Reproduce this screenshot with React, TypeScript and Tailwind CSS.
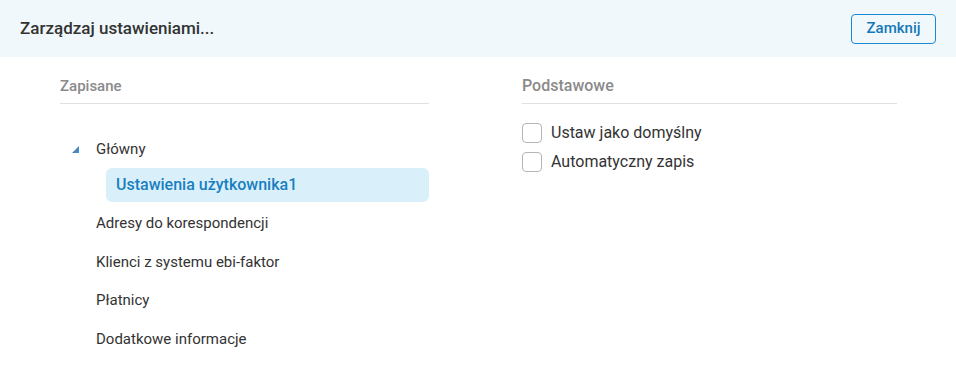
import React from 'react';

const items = ['Adresy do korespondencji', 'Klienci z systemu ebi-faktor', 'Płatnicy', 'Dodatkowe informacje'];

const Checkbox: React.FC<{ label: string }> = ({ label }) => (
  <label className="flex items-center gap-[9px] h-[29px]">
    <span className="w-5 h-5 rounded-[4px] border border-[#b5b5b5] bg-white" />
    <span className="text-[16px] text-[#333]">{label}</span>
  </label>
);

export default function App() {
  return (
    <div className="w-[956px] h-[387px] bg-white font-['Roboto',sans-serif]">
      <div className="h-[57px] bg-[#f0f8fc] flex items-center justify-between pl-5 pr-5">
        <h1 className="text-[17px] font-medium text-[#333]">Zarządzaj ustawieniami...</h1>
        <button className="h-[30px] w-[85px] rounded-[4px] border border-[#1a8ad0] text-[15px] font-medium text-[#1578b8] bg-transparent">
          Zamknij
        </button>
      </div>
      <div className="flex pt-[18px]">
        <div className="ml-[60px] w-[369px]">
          <div className="h-[29px] border-b border-[#e0e0e0] text-[15px] font-medium text-[#8a8a8a] leading-[22px]">Zapisane</div>
          <div className="pt-[29px]">
            <div className="flex items-center h-[32px]">
              <svg width="7" height="7" viewBox="0 0 7 7" className="ml-[12px] mr-[17px]">
                <polygon points="7,0 7,7 0,7" fill="#4a88c4" />
              </svg>
              <span className="text-[15px] text-[#333]">Główny</span>
            </div>
            <div className="ml-[46px] mt-[3px] h-[34px] rounded-[6px] bg-[#d9f0fa] flex items-center pl-[10px] text-[16px] font-medium text-[#1a7fc0]">
              Ustawienia użytkownika1
            </div>
            <div className="mt-[2px]">
              {items.map((t) => (
                <div key={t} className="h-[38.5px] flex items-center pl-[36px] text-[15px] text-[#333]">{t}</div>
              ))}
            </div>
          </div>
        </div>
        <div className="ml-[93px] w-[375px]">
          <div className="h-[29px] border-b border-[#e0e0e0] text-[16px] font-medium text-[#8a8a8a] leading-[22px]">Podstawowe</div>
          <div className="pt-[14px]">
            <Checkbox label="Ustaw jako domyślny" />
            <Checkbox label="Automatyczny zapis" />
          </div>
        </div>
      </div>
    </div>
  );
}
